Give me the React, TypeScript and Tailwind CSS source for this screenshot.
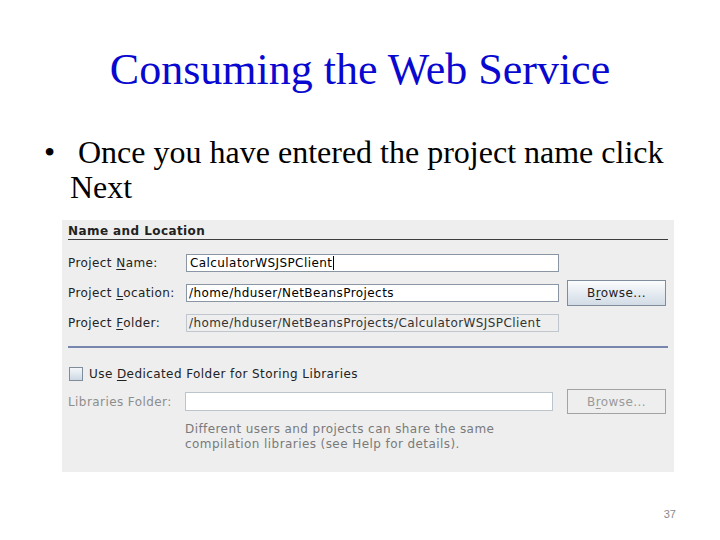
import React from "react";

const ui = { fontFamily: '"DejaVu Sans", "Liberation Sans", sans-serif' };
const serif = { fontFamily: '"Liberation Serif", "Times New Roman", serif' };

function U({ children }: { children: React.ReactNode }) {
  return <span className="underline underline-offset-2">{children}</span>;
}

function Label({ children, disabled }: { children: React.ReactNode; disabled?: boolean }) {
  return (
    <div className={`w-[118px] shrink-0 text-[12px] leading-[16px] ${disabled ? "text-[#8d8d8d]" : "text-[#222222]"}`}>
      {children}
    </div>
  );
}

function Button({ disabled }: { disabled?: boolean }) {
  return (
    <div
      className={
        disabled
          ? "ml-[8px] flex h-[25px] w-[99px] items-center justify-center border border-[#a3a3a3] bg-[#eeeeee] text-[12px] text-[#9a9a9a]"
          : "ml-[8px] flex h-[26px] w-[99px] items-center justify-center border border-[#7f8c9b] bg-gradient-to-b from-[#fbfcfd] to-[#d2dbe6] text-[12px] text-[#222222]"
      }
    >
      <span>
        B<U>r</U>owse...
      </span>
    </div>
  );
}

export default function App() {
  return (
    <div className="flex h-[540px] w-[720px] flex-col bg-white">
      <div
        className="mt-[46px] text-center text-[44px] leading-[48px] text-[#0808d0]"
        style={serif}
      >
        Consuming the Web Service
      </div>

      <div className="mt-[41px] pl-[70px] pr-[20px] text-[32px] leading-[35px] text-black" style={serif}>
        <span className="-ml-[26px] inline-block w-[34px]">•</span>
        Once you have entered the project name click Next
      </div>

      <div
        className="ml-[62px] mt-[15px] flex h-[252px] w-[612px] flex-col bg-[#eeeeee] px-[6px] tracking-[0.42px]"
        style={ui}
      >
        <div className="h-[20px] border-b border-[#3c3c3c] pt-[3px] text-[12px] font-bold leading-[17px] text-[#222222]">
          Name and Location
        </div>

        <div className="mt-[14px] flex h-[18px] items-center">
          <Label>
            Project <U>N</U>ame:
          </Label>
          <div className="flex h-[18px] w-[373px] items-center border border-[#8a96a3] bg-white pl-[3px] text-[12px] text-black">
            CalculatorWSJSPClient
            <span className="ml-px inline-block h-[14px] w-px bg-black" />
          </div>
        </div>

        <div className="mt-[8px] flex h-[26px] items-center">
          <Label>
            Project <U>L</U>ocation:
          </Label>
          <div className="flex h-[18px] w-[373px] items-center border border-[#8a96a3] bg-white pl-[2px] text-[12px] text-black">
            /home/hduser/NetBeansProjects
          </div>
          <Button />
        </div>

        <div className="mt-[8px] flex h-[18px] items-center">
          <Label>
            Project <U>F</U>older:
          </Label>
          <div className="flex h-[18px] w-[373px] items-center border border-[#bfc6ce] bg-[#eeeeee] pl-[2px] text-[12px] text-[#333333]">
            /home/hduser/NetBeansProjects/CalculatorWSJSPClient
          </div>
        </div>

        <div className="mt-[14px] h-[2px] w-full bg-[#7686ad]" />

        <div className="mt-[19px] flex h-[14px] items-center">
          <div className="ml-px h-[14px] w-[14px] border border-[#7f8c9b] bg-gradient-to-b from-[#f4f7fa] to-[#cdd8e4]" />
          <div className="ml-[6px] text-[12px] leading-[16px] text-[#222222]">
            Use <U>D</U>edicated Folder for Storing Libraries
          </div>
        </div>

        <div className="mt-[8px] flex h-[25px] items-center">
          <Label disabled>Libraries Folder:</Label>
          <div className="-ml-px h-[19px] w-[368px] border border-[#bcc4cc] bg-white" />
          <div className="ml-[6px]" />
          <Button disabled />
        </div>

        <div className="ml-[117px] mt-[8px] text-[12px] leading-[15px] text-[#7a7a7a]">
          <div>Different users and projects can share the same</div>
          <div>compilation libraries (see Help for details).</div>
        </div>
      </div>

      <div
        className="mt-[35px] pr-[44px] text-right text-[11px] leading-[14px] text-[#8a8a8a]"
        style={{ fontFamily: '"Liberation Sans", Arial, sans-serif' }}
      >
        37
      </div>
    </div>
  );
}
